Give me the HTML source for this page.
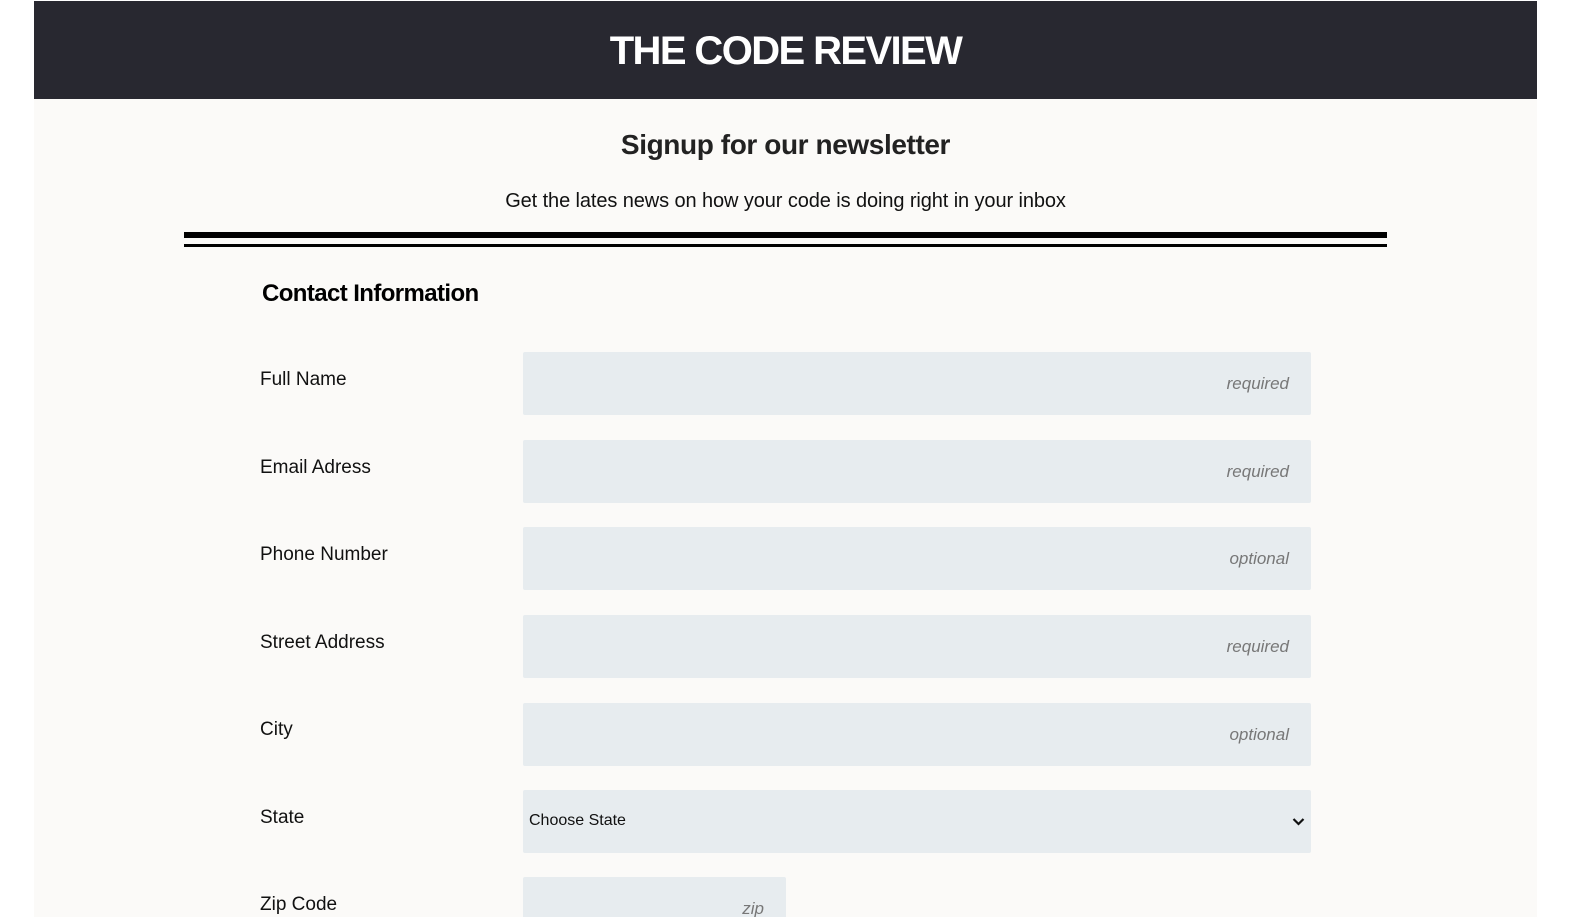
<!DOCTYPE html>
<html><head><meta charset="utf-8"><style>
*{margin:0;padding:0;box-sizing:border-box}
html,body{width:1577px;height:922px;overflow:hidden;background:#fff;font-family:"Liberation Sans",sans-serif}
.wrap{position:absolute;left:34px;top:1px;width:1503px;height:916px;background:#fbfaf8;overflow:hidden}
.hdr{position:absolute;left:0;top:0;width:1503px;height:98px;background:#282830;color:#fff;text-align:center;font-weight:bold;font-size:40px;line-height:100px;letter-spacing:-1.6px}
.h2{position:absolute;left:0;width:1503px;text-align:center;top:128px;font-size:28px;color:#222;font-weight:bold;letter-spacing:-0.4px}
.sub{position:absolute;left:0;width:1503px;text-align:center;top:189px;font-size:20px;color:#111;letter-spacing:-0.1px}
.l1{position:absolute;left:150px;top:231px;width:1203px;height:6px;background:#000}
.l2{position:absolute;left:150px;top:243px;width:1203px;height:3px;background:#000}
.ci{position:absolute;left:228px;top:279px;font-size:24px;font-weight:bold;color:#000;letter-spacing:-0.6px}
.lab{position:absolute;left:226px;font-size:19px;color:#111}
.f{position:absolute;left:489px;width:788px;height:63px;background:#e7ecef;border-radius:2px}
.f span{position:absolute;right:22px;top:22px;font-style:italic;font-size:17px;color:#777}
.f b{position:absolute;left:6px;top:22px;font-weight:normal;font-size:16px;color:#111}
</style></head><body>
<div class="wrap">
<div class="hdr">THE CODE REVIEW</div>
<div class="h2">Signup for our newsletter</div>
<div class="sub">Get the lates news on how your code is doing right in your inbox</div>
<div class="l1"></div><div class="l2"></div>
<div class="ci">Contact Information</div>

<div class="lab" style="top:368px">Full Name</div>
<div class="f" style="top:351px"><span>required</span></div>
<div class="lab" style="top:456px">Email Adress</div>
<div class="f" style="top:439px"><span>required</span></div>
<div class="lab" style="top:543px">Phone Number</div>
<div class="f" style="top:526px"><span>optional</span></div>
<div class="lab" style="top:631px">Street Address</div>
<div class="f" style="top:614px"><span>required</span></div>
<div class="lab" style="top:718px">City</div>
<div class="f" style="top:702px"><span>optional</span></div>
<div class="lab" style="top:806px">State</div>
<div class="f" style="top:789px"><b>Choose State</b>
<svg style="position:absolute;right:6px;top:27px" width="13" height="9" viewBox="0 0 13 9"><path d="M1.5 2 L6.5 7 L11.5 2" fill="none" stroke="#111" stroke-width="2.2"/></svg></div>
<div class="lab" style="top:893px">Zip Code</div>
<div class="f" style="top:876px;width:263px"><span>zip</span></div>
</div>
</body></html>
